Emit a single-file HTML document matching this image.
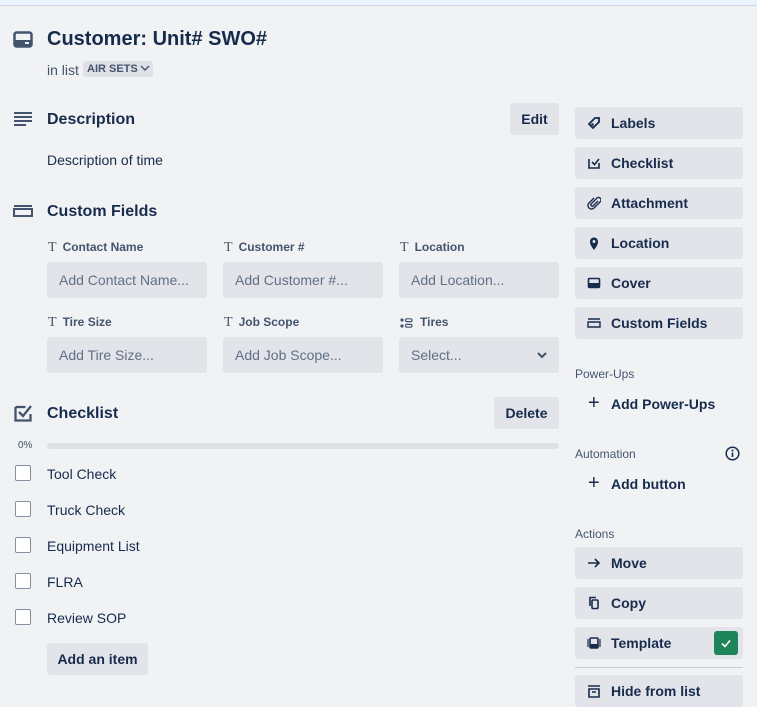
<!DOCTYPE html>
<html><head><meta charset="utf-8"><style>
*{box-sizing:border-box;margin:0;padding:0}
body{width:757px;height:697px;overflow:hidden;background:#f1f2f4;font-family:"Liberation Sans","DejaVu Sans",sans-serif;color:#172b4d;position:relative}
.a{position:absolute}
.top{left:0;top:0;width:757px;height:6px;background:#e9f2ff;border-bottom:1px solid #cfd6e2}
.btn{position:absolute;background:#e2e4e9;border-radius:3px;font-size:14px;font-weight:bold;color:#172b4d;display:flex;align-items:center}
.sb{left:575px;width:168px;height:32px;padding-left:36px}
.sb .ic{position:absolute;left:12px;top:9px}
.lbl{font-size:12px;font-weight:bold;color:#44546f}
.lbl span{color:#44546f;font-weight:normal;margin-right:6px;font-family:"Liberation Serif",serif;font-size:14px}
.inp{position:absolute;width:160px;height:36px;background:#e2e4e9;border-radius:3px;font-size:14px;color:#626f86;padding:10px 12px}
.cb{position:absolute;left:15px;width:16px;height:16px;border:1.5px solid #8590a2;border-radius:2px;background:#fff}
.it{position:absolute;left:47px;font-size:14px;color:#172b4d}
h2{position:absolute;font-size:16px;font-weight:bold;color:#172b4d}
.sec{position:absolute;left:575px;font-size:12px;color:#44546f}
</style></head><body>
<div class="a top"></div>
<svg class="a" style="left:13px;top:31px" width="20" height="18" viewBox="0 0 20 18"><rect x="1.5" y="1.5" width="17" height="14" rx="2" fill="none" stroke="#44546f" stroke-width="2.5"/><rect x="2" y="9" width="16" height="6" fill="#44546f"/><rect x="12" y="11" width="4" height="2" fill="#f1f2f4"/></svg>
<div class="a" style="left:47px;top:28px;font-size:20px;font-weight:bold;color:#172b4d">Customer: Unit# SWO#</div>
<div class="a" style="left:47px;top:62px;font-size:14px;color:#44546f">in list</div>
<div class="a" style="left:83px;top:61px;width:70px;height:16px;background:#dfe1e6;border-radius:3px;font-size:11px;font-weight:bold;color:#44546f;padding:2px 4px;white-space:nowrap">AIR SETS<svg width="10" height="7" style="margin-left:2px"><path d="M1 1l4 4 4-4" fill="none" stroke="#44546f" stroke-width="1.4"/></svg></div>

<svg class="a" style="left:13px;top:112px" width="20" height="14"><g stroke="#44546f" stroke-width="2"><line x1="1" y1="1" x2="19" y2="1"/><line x1="1" y1="5" x2="19" y2="5"/><line x1="1" y1="9" x2="19" y2="9"/><line x1="1" y1="13" x2="13" y2="13"/></g></svg>
<h2 style="left:47px;top:111px">Description</h2>
<div class="btn" style="left:510px;top:103px;width:49px;height:32px;justify-content:center">Edit</div>
<div class="a" style="left:47px;top:152px;font-size:14px">Description of time</div>

<svg class="a" style="left:12px;top:204px" width="22" height="14"><path d="M2 2h18M2 5h18v7H2z" fill="none" stroke="#44546f" stroke-width="2"/></svg>
<h2 style="left:47px;top:203px">Custom Fields</h2>

<div class="a lbl" style="left:48px;top:240px"><span>T</span>Contact Name</div>
<div class="a lbl" style="left:224px;top:240px"><span>T</span>Customer #</div>
<div class="a lbl" style="left:400px;top:240px"><span>T</span>Location</div>
<div class="inp" style="left:47px;top:262px">Add Contact Name...</div>
<div class="inp" style="left:223px;top:262px">Add Customer #...</div>
<div class="inp" style="left:399px;top:262px">Add Location...</div>
<div class="a lbl" style="left:48px;top:315px"><span>T</span>Tire Size</div>
<div class="a lbl" style="left:224px;top:315px"><span>T</span>Job Scope</div>
<svg class="a" style="left:400px;top:318px" width="13" height="10"><circle cx="2" cy="2" r="1.6" fill="#44546f"/><circle cx="2" cy="8" r="1.6" fill="#44546f"/><rect x="5.5" y="0.8" width="6.5" height="2.8" rx="1.4" fill="none" stroke="#44546f" stroke-width="1.2"/><rect x="5.5" y="6.4" width="6.5" height="2.8" rx="1.4" fill="none" stroke="#44546f" stroke-width="1.2"/></svg>
<div class="a lbl" style="left:420px;top:315px">Tires</div>
<div class="inp" style="left:47px;top:337px">Add Tire Size...</div>
<div class="inp" style="left:223px;top:337px">Add Job Scope...</div>
<div class="inp" style="left:399px;top:337px">Select...<svg style="position:absolute;right:12px;top:15px" width="10" height="7"><path d="M1 1l4 4 4-4" fill="none" stroke="#44546f" stroke-width="2"/></svg></div>

<svg class="a" style="left:14px;top:404px" width="18" height="18"><path d="M1.5 3v13.5h15V10" fill="none" stroke="#44546f" stroke-width="2.3"/><path d="M1.5 3h10" stroke="#44546f" stroke-width="2.3"/><path d="M5 8l4 4 8-10" fill="none" stroke="#44546f" stroke-width="2.3"/></svg>
<h2 style="left:47px;top:405px">Checklist</h2>
<div class="btn" style="left:494px;top:397px;width:65px;height:32px;justify-content:center">Delete</div>
<div class="a" style="left:18px;top:440px;font-size:10px;color:#44546f">0%</div>
<div class="a" style="left:47px;top:443px;width:512px;height:6px;background:#dfe1e6;border-radius:3px"></div>

<div class="cb" style="top:465px"></div><div class="it" style="top:466px">Tool Check</div>
<div class="cb" style="top:501px"></div><div class="it" style="top:502px">Truck Check</div>
<div class="cb" style="top:537px"></div><div class="it" style="top:538px">Equipment List</div>
<div class="cb" style="top:573px"></div><div class="it" style="top:574px">FLRA</div>
<div class="cb" style="top:609px"></div><div class="it" style="top:610px">Review SOP</div>
<div class="btn" style="left:47px;top:643px;width:101px;height:32px;justify-content:center">Add an item</div>

<div class="btn sb" style="top:107px"><svg class="ic" width="14" height="14"><path d="M2 8l6-6h4v4l-6 6z" fill="none" stroke="#172b4d" stroke-width="1.8"/><circle cx="5.5" cy="8.5" r="1.3" fill="#172b4d"/></svg>Labels</div>
<div class="btn sb" style="top:147px"><svg class="ic" width="14" height="14"><path d="M2 3v9h10V7M5 6l2.5 2.5L12 3" fill="none" stroke="#172b4d" stroke-width="1.6"/></svg>Checklist</div>
<div class="btn sb" style="top:187px"><svg class="ic" width="14" height="14"><path d="M11 5L6 10a1.5 1.5 0 01-2-2l6-6a2.5 2.5 0 013.5 3.5L7 12a3.5 3.5 0 01-5-5l5-5" fill="none" stroke="#172b4d" stroke-width="1.4"/></svg>Attachment</div>
<div class="btn sb" style="top:227px"><svg class="ic" width="14" height="14"><path d="M7 14C4 10 3 8 3 5.5a4 4 0 018 0C11 8 10 10 7 14z" fill="#172b4d"/><circle cx="7" cy="5.5" r="1.5" fill="#e2e4e9"/></svg>Location</div>
<div class="btn sb" style="top:267px"><svg class="ic" width="14" height="14"><rect x="1.5" y="2.5" width="11" height="9" rx="1" fill="none" stroke="#172b4d" stroke-width="1.6"/><rect x="1.5" y="7" width="11" height="4.5" fill="#172b4d"/></svg>Cover</div>
<div class="btn sb" style="top:307px"><svg class="ic" width="14" height="14"><path d="M1 3h12M1 6h12v5H1z" fill="none" stroke="#172b4d" stroke-width="1.4"/></svg>Custom Fields</div>

<div class="sec" style="top:367px">Power-Ups</div>
<div class="a" style="left:588px;top:393px;font-size:20px;color:#172b4d;line-height:20px">+</div>
<div class="a" style="left:611px;top:396px;font-size:14px;font-weight:bold">Add Power-Ups</div>
<div class="sec" style="top:447px">Automation</div>
<svg class="a" style="left:725px;top:446px" width="15" height="15"><circle cx="7.5" cy="7.5" r="6.3" fill="none" stroke="#172b4d" stroke-width="1.5"/><rect x="6.7" y="6.5" width="1.6" height="4.5" fill="#172b4d"/><circle cx="7.5" cy="4.5" r="1" fill="#172b4d"/></svg>
<div class="a" style="left:588px;top:473px;font-size:20px;color:#172b4d;line-height:20px">+</div>
<div class="a" style="left:611px;top:476px;font-size:14px;font-weight:bold">Add button</div>
<div class="sec" style="top:527px">Actions</div>
<div class="btn sb" style="top:547px"><svg class="ic" width="14" height="14"><path d="M1 7h11M8 3l4 4-4 4" fill="none" stroke="#172b4d" stroke-width="1.6"/></svg>Move</div>
<div class="btn sb" style="top:587px"><svg class="ic" width="14" height="14"><path d="M3 10V1.5h6" fill="none" stroke="#172b4d" stroke-width="1.6"/><rect x="5" y="4" width="6" height="8.5" rx="1" fill="none" stroke="#172b4d" stroke-width="1.6"/></svg>Copy</div>
<div class="btn sb" style="top:627px"><svg class="ic" width="14" height="14"><path d="M1 3v8M13 3v8" stroke="#172b4d" stroke-width="1.2"/><rect x="3" y="2" width="8" height="10" rx="1" fill="none" stroke="#172b4d" stroke-width="1.6"/><rect x="3" y="8" width="8" height="4" fill="#172b4d"/></svg>Template
<div style="position:absolute;right:5px;top:4px;width:24px;height:24px;background:#1f845a;border-radius:3px"><svg width="24" height="24" style="display:block"><path d="M8 12.5l3 3 5-6" fill="none" stroke="#fff" stroke-width="1.6"/></svg></div></div>
<div class="a" style="left:575px;top:667px;width:168px;height:1px;background:#c7ccd4"></div>
<div class="btn sb" style="top:675px"><svg class="ic" width="14" height="14"><path d="M1 2h12M2 5h10v8H2zM5 8h4" fill="none" stroke="#172b4d" stroke-width="1.6"/></svg>Hide from list</div>
</body></html>
